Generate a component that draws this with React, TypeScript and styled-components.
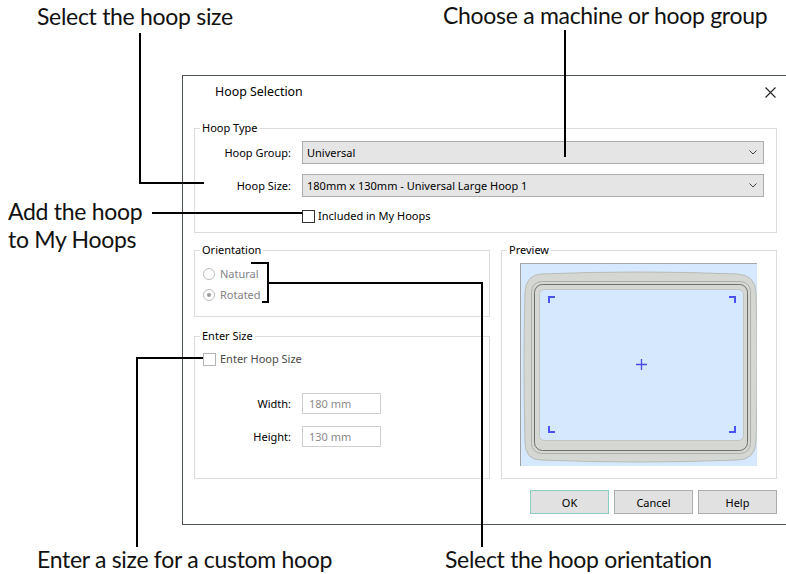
import React from 'react';
import styled, { createGlobalStyle } from 'styled-components';

const GlobalStyle = createGlobalStyle`
  html, body {
    margin: 0;
    padding: 0;
    background: #fff;
  }
  body {
    overflow: hidden;
  }
`;

const Page = styled.div`
  position: relative;
  width: 786px;
  height: 574px;
  overflow: hidden;
  box-sizing: border-box;
  padding: 75px 0 0 182px;
  font-family: 'Noto Sans', 'Liberation Sans', sans-serif;
  font-size: 11px;
  color: #000;
`;

const Dialog = styled.div`
  width: 605px;
  box-sizing: border-box;
  border: 1px solid #4b5357;
  background: #fff;
  display: flex;
  flex-direction: column;
`;

const TitleBar = styled.div`
  height: 32px;
  display: flex;
  align-items: center;
  justify-content: space-between;
  padding: 0 10px 0 32px;
`;

const Title = styled.span`
  font-size: 12.4px;
  line-height: 14px;
`;

const DialogBody = styled.div`
  display: flex;
  flex-direction: column;
  padding: 13px 9px 10px 11px;
`;

const Group = styled.fieldset`
  margin: 0;
  padding: 0;
  min-width: 0;
  border: 1px solid #dcdcdc;
`;

const Legend = styled.legend`
  margin-left: 5px;
  padding: 0 2px;
  font-size: 11px;
  line-height: 14px;
`;

const FormGrid = styled.div`
  display: grid;
  grid-template-columns: 96px 1fr;
  column-gap: 11px;
  row-gap: 10px;
  align-items: center;
  padding: 6px 12px 9px 0;
`;

const FieldLabel = styled.span`
  text-align: right;
  white-space: nowrap;
  line-height: 14px;
`;

const Combo = styled.div`
  height: 23px;
  box-sizing: border-box;
  display: flex;
  align-items: center;
  justify-content: space-between;
  padding: 0 6px 0 4px;
  background: #e5e5e5;
  border: 1px solid #adadad;
  white-space: nowrap;
`;

const CheckRow = styled.div<{ $dim?: boolean; $indent?: number }>`
  display: flex;
  align-items: center;
  gap: 4px;
  height: 14px;
  padding-left: ${(p) => p.$indent ?? 0}px;
  color: ${(p) => (p.$dim ? '#4a4a4a' : '#000')};
  line-height: 14px;
`;

const HoopCheckRow = styled(CheckRow)`
  grid-column: 2;
  margin-top: 2px;
  gap: 3px;
`;

const CheckBox = styled.span<{ $dim?: boolean }>`
  width: 13px;
  height: 13px;
  box-sizing: border-box;
  border: 1px solid ${(p) => (p.$dim ? '#b4b4b4' : '#333')};
  background: #fff;
`;

const LowerGrid = styled.div`
  display: grid;
  grid-template-columns: 296px 1fr;
  column-gap: 11px;
  margin-top: 10px;
`;

const LeftColumn = styled.div`
  display: flex;
  flex-direction: column;
  gap: 12px;
`;

const RadioList = styled.div`
  display: flex;
  flex-direction: column;
  padding: 6px 0 11px 8px;
`;

const RadioRow = styled.div`
  height: 21px;
  display: flex;
  align-items: center;
  gap: 5px;
  color: #838383;
`;

const RadioDot = styled.span<{ $checked?: boolean }>`
  width: 12px;
  height: 12px;
  box-sizing: border-box;
  border-radius: 50%;
  border: 1px solid #bcbcbc;
  background: #fff;
  display: flex;
  align-items: center;
  justify-content: center;
  &::after {
    content: '';
    width: 4px;
    height: 4px;
    border-radius: 50%;
    background: ${(p) => (p.$checked ? '#9a9a9a' : 'transparent')};
  }
`;

const SizeBody = styled.div`
  padding: 9px 0 31px 0;
`;

const SizeGrid = styled.div`
  display: grid;
  grid-template-columns: 96px 79px;
  column-gap: 11px;
  row-gap: 12px;
  align-items: center;
  margin-top: 27px;
`;

const NumberBox = styled.div`
  height: 21px;
  box-sizing: border-box;
  border: 1px solid #cfcfcf;
  background: #fff;
  color: #8a8a8a;
  display: flex;
  align-items: center;
  padding-left: 6px;
`;

const PreviewBody = styled.div`
  padding: 6px 0 11px 18px;
`;

const PreviewCanvas = styled.div`
  width: 237px;
  height: 203px;
  box-sizing: border-box;
  border-top: 1px solid #a8a8a8;
  border-left: 1px solid #a0a0a0;
  background: #d5e8fd;
  svg {
    display: block;
  }
`;

const ButtonRow = styled.div`
  display: flex;
  justify-content: flex-end;
  gap: 5px;
  margin-top: 11px;
`;

const Button = styled.button<{ $primary?: boolean }>`
  width: 79px;
  height: 24px;
  box-sizing: border-box;
  border: 1px solid ${(p) => (p.$primary ? '#8ccbc4' : '#adadad')};
  background: #e1e1e1;
  font-family: inherit;
  font-size: 11px;
  color: #000;
  padding: 0;
`;

const Overlay = styled.svg`
  position: absolute;
  left: 0;
  top: 0;
  pointer-events: none;
`;

const Callout = styled.div<{ $x: number; $y: number }>`
  position: absolute;
  left: ${(p) => p.$x}px;
  top: ${(p) => p.$y}px;
  font-family: Lato, 'Open Sans', sans-serif;
  font-size: 23px;
  line-height: 28px;
  letter-spacing: -0.3px;
  color: #111;
  white-space: nowrap;
`;

const Chevron = () => (
  <svg width="8" height="5" viewBox="0 0 8 5">
    <path d="M0.5 0.5 L4 4 L7.5 0.5" fill="none" stroke="#444" strokeWidth="1" />
  </svg>
);

const CloseIcon = () => (
  <svg width="11" height="11" viewBox="0 0 11 11">
    <path d="M0.5 0.5 L10.5 10.5 M10.5 0.5 L0.5 10.5" stroke="#222" strokeWidth="1.1" />
  </svg>
);

const HoopDrawing = () => (
  <svg width="236" height="202" viewBox="0 0 236 202">
    <path
      d="M20 10 Q118 6 216 10 Q234 11 235 28 Q237 98 235 178 Q234 196 216 196 Q118 200 20 196 Q4 196 4 178 Q2 98 4 28 Q5 11 20 10 Z"
      fill="#d5d8d2"
      stroke="#b9bcb6"
    />
    <rect x="10.5" y="17.5" width="219" height="172" rx="10" fill="none" stroke="#aeb1ab" />
    <rect x="13.5" y="20.5" width="213" height="166" rx="8" fill="none" stroke="#6d706b" />
    <rect x="18.5" y="25.5" width="204" height="151" rx="5" fill="#d5e8fd" stroke="#c2c5bf" />
    <g fill="none" stroke="#4a52f5" strokeWidth="2">
      <path d="M28 39 V33 H34" />
      <path d="M208 33 H214 V39" />
      <path d="M28 162 V168 H34" />
      <path d="M208 168 H214 V162" />
    </g>
    <path d="M115 100.5 H126 M120.5 95 V106" stroke="#4a4af0" strokeWidth="1.3" />
  </svg>
);

export default function App() {
  return (
    <>
      <GlobalStyle />
      <Page>
        <Dialog>
          <TitleBar>
            <Title>Hoop Selection</Title>
            <CloseIcon />
          </TitleBar>
          <DialogBody>
            <Group>
              <Legend>Hoop Type</Legend>
              <FormGrid>
                <FieldLabel>Hoop Group:</FieldLabel>
                <Combo>
                  <span>Universal</span>
                  <Chevron />
                </Combo>
                <FieldLabel>Hoop Size:</FieldLabel>
                <Combo>
                  <span>180mm x 130mm - Universal Large Hoop 1</span>
                  <Chevron />
                </Combo>
                <HoopCheckRow>
                  <CheckBox />
                  <span>Included in My Hoops</span>
                </HoopCheckRow>
              </FormGrid>
            </Group>

            <LowerGrid>
              <LeftColumn>
                <Group>
                  <Legend>Orientation</Legend>
                  <RadioList>
                    <RadioRow>
                      <RadioDot />
                      <span>Natural</span>
                    </RadioRow>
                    <RadioRow>
                      <RadioDot $checked />
                      <span>Rotated</span>
                    </RadioRow>
                  </RadioList>
                </Group>
                <Group>
                  <Legend>Enter Size</Legend>
                  <SizeBody>
                    <CheckRow $dim $indent={8}>
                      <CheckBox $dim />
                      <span>Enter Hoop Size</span>
                    </CheckRow>
                    <SizeGrid>
                      <FieldLabel>Width:</FieldLabel>
                      <NumberBox>180 mm</NumberBox>
                      <FieldLabel>Height:</FieldLabel>
                      <NumberBox>130 mm</NumberBox>
                    </SizeGrid>
                  </SizeBody>
                </Group>
              </LeftColumn>

              <Group>
                <Legend>Preview</Legend>
                <PreviewBody>
                  <PreviewCanvas>
                    <HoopDrawing />
                  </PreviewCanvas>
                </PreviewBody>
              </Group>
            </LowerGrid>

            <ButtonRow>
              <Button $primary>OK</Button>
              <Button>Cancel</Button>
              <Button>Help</Button>
            </ButtonRow>
          </DialogBody>
        </Dialog>

        {/* annotation leaders drawn over the screenshot */}
        <Overlay width="786" height="574" viewBox="0 0 786 574">
          <g fill="none" stroke="#000" strokeWidth="2">
            <path d="M140 33 V183 H204" />
            <path d="M565 30 V157" />
            <path d="M152 213 H302" />
            <path d="M251 263 H268 V302 H262" />
            <path d="M268 283 H482 V547" />
            <path d="M203 358 H137 V547" />
          </g>
        </Overlay>

        <Callout $x={37} $y={2}>Select the hoop size</Callout>
        <Callout $x={443} $y={1}>Choose a machine or hoop group</Callout>
        <Callout $x={8} $y={197}>
          Add the hoop
          <br />
          to My Hoops
        </Callout>
        <Callout $x={37} $y={545}>Enter a size for a custom hoop</Callout>
        <Callout $x={445} $y={545}>Select the hoop orientation</Callout>
      </Page>
    </>
  );
}
